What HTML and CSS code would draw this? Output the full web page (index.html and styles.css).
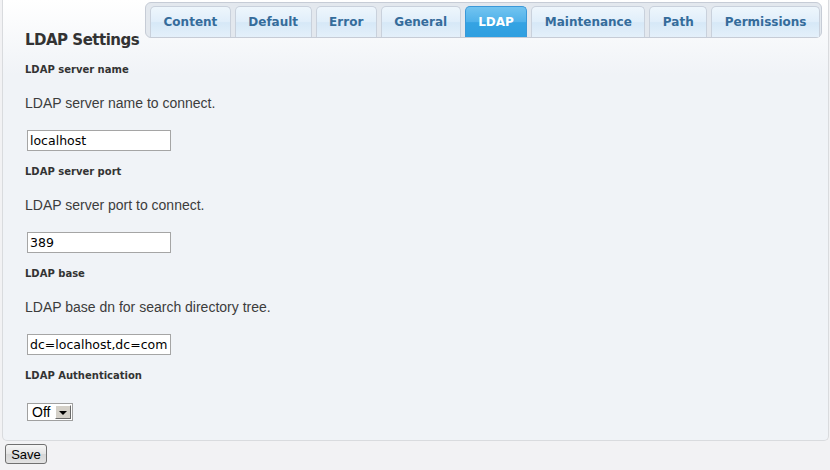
FILE: index.html
```html
<!DOCTYPE html>
<html lang="en">
<head>
  <meta charset="utf-8">
  <title>LDAP Settings</title>
  <link rel="stylesheet" href="styles.css">
</head>
<body>

  <div class="panel">
    <div class="panel-head">
      <h1>LDAP Settings</h1>
      <ul class="tabs">
        <li><a href="#">Content</a></li>
        <li><a href="#">Default</a></li>
        <li><a href="#">Error</a></li>
        <li><a href="#">General</a></li>
        <li class="active"><a href="#">LDAP</a></li>
        <li><a href="#">Maintenance</a></li>
        <li><a href="#">Path</a></li>
        <li><a href="#">Permissions</a></li>
      </ul>
    </div>

    <div class="field">
      <label for="ldap-host">LDAP server name</label>
      <p>LDAP server name to connect.</p>
      <input type="text" id="ldap-host" value="localhost">
    </div>

    <div class="field">
      <label for="ldap-port">LDAP server port</label>
      <p>LDAP server port to connect.</p>
      <input type="text" id="ldap-port" value="389">
    </div>

    <div class="field">
      <label for="ldap-base">LDAP base</label>
      <p>LDAP base dn for search directory tree.</p>
      <input type="text" id="ldap-base" value="dc=localhost,dc=com">
    </div>

    <div class="field last">
      <label>LDAP Authentication</label>
      <div class="select">
        <span class="select-value">Off</span>
        <span class="select-btn"><span class="arrow"></span></span>
      </div>
    </div>
  </div>

  <button class="save">Save</button>

</body>
</html>
```

FILE: styles.css
```css
body {
  margin: 0;
  background: #f2f2f4;
  font-family: "Liberation Sans", Arial, sans-serif;
  color: #333;
}

.panel {
  margin: 0 1px 0 2px;
  padding: 0 0 19px 22px;
  border: 1px solid #d9dbde;
  border-top: none;
  border-radius: 0 0 5px 5px;
  background: linear-gradient(#ffffff 0px, #f0f3f7 75px, #f0f3f7 100%);
}

.panel-head {
  display: flex;
  justify-content: space-between;
  align-items: flex-start;
}

.panel-head h1 {
  margin: 31px 0 0 0;
  white-space: nowrap;
  font-family: "DejaVu Sans", sans-serif;
  font-size: 15px;
  line-height: 18px;
  letter-spacing: -0.5px;
  font-weight: bold;
  color: #333;
}

.tabs {
  display: flex;
  flex-shrink: 0;
  gap: 4px;
  list-style: none;
  margin: 2px 6px 0 0;
  padding: 3px 1px 0 4px;
  height: 31px;
  background: #e3e8ee;
  border: 1px solid #c6ccd6;
  border-radius: 6px;
}

.tabs li {
  display: flex;
}

.tabs a {
  display: flex;
  align-items: center;
  padding: 0 12.5px;
  height: 30px;
  border: 1px solid #c9d1dc;
  border-bottom: none;
  border-radius: 5px 5px 0 0;
  background: linear-gradient(#eef6fc, #e0eefa 50%, #d6e8f7 52%, #e4f0fa);
  font-family: "DejaVu Sans", sans-serif;
  font-size: 12px;
  font-weight: bold;
  white-space: nowrap;
  color: #356c9b;
  text-decoration: none;
}

.tabs .active a {
  border-color: #3a98d8;
  background: linear-gradient(#72c4f0, #4fb1ea 50%, #35a3e3 52%, #2f9fe0);
  color: #fff;
}

.field {
  margin-top: 13px;
}

.field label {
  display: block;
  font-family: "DejaVu Sans", sans-serif;
  font-size: 10px;
  font-weight: bold;
  line-height: 16px;
  color: #333;
}

.field p {
  margin: 16px 0 18px;
  font-size: 14px;
  line-height: 18px;
  color: #3c3c3c;
}

.field input {
  display: block;
  box-sizing: border-box;
  margin-left: 2px;
  width: 144px;
  height: 21px;
  padding: 0 2px;
  border: 1px solid #a5a5a5;
  background: #fff;
  font-family: "DejaVu Sans", sans-serif;
  font-size: 12.5px;
  color: #000;
}

.field.last .select {
  margin-top: 19px;
}

.select {
  display: inline-flex;
  align-items: stretch;
  box-sizing: border-box;
  margin-left: 2px;
  height: 18px;
  border: 1px solid #a0a0a0;
  background: #fff;
}

.select-value {
  padding: 0 4px 0 4px;
  font-size: 14px;
  line-height: 16px;
  color: #000;
}

.select-btn {
  display: flex;
  align-items: center;
  justify-content: center;
  width: 14px;
  margin: 1px;
  border: 1px solid;
  border-color: #fff #6a6a6a #6a6a6a #fff;
  background: #d4d0c8;
}

.arrow {
  width: 0;
  height: 0;
  margin-top: 1px;
  border-left: 4px solid transparent;
  border-right: 4px solid transparent;
  border-top: 4px solid #000;
}

.save {
  display: block;
  margin: 3px 0 0 5px;
  width: 42px;
  height: 20px;
  padding: 0;
  border: 1px solid #707070;
  border-radius: 3px;
  background: linear-gradient(#f6f6f6, #e4e4e4 50%, #d6d6d6 52%, #e2e2e2);
  font-family: "Liberation Sans", Arial, sans-serif;
  font-size: 13px;
  color: #000;
  cursor: pointer;
}
```
